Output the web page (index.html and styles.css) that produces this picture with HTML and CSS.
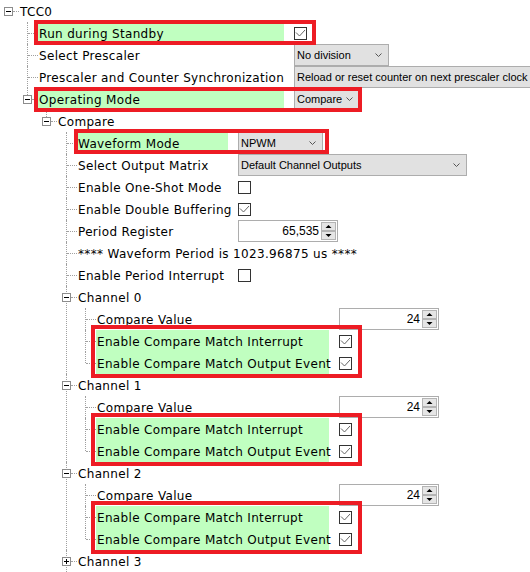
FILE: index.html
```html
<!DOCTYPE html>
<html>
<head>
<meta charset="utf-8">
<title>TCC0</title>
<link rel="stylesheet" href="styles.css">
</head>
<body>
<div class="tree">
  <div class="item root">
    <div class="row">
      <span class="gut"><svg class="tog" width="9" height="9" viewBox="0 0 9 9"><rect x=".5" y=".5" width="8" height="8" fill="#fff" stroke="#8c8c8c"/><path d="M2 4.5h5" stroke="#000"/></svg><i class="con"></i></span>
      <span class="txt">TCC0</span>
    </div>
    <div class="kids g1">
      <div class="item">
        <div class="row">
          <span class="gut"><i class="con leaf"></i></span>
          <span class="hl hl-rs">
            <span class="lbl on">Run during Standby</span>
            <span class="val"><svg class="cb" width="13" height="13" viewBox="0 0 13 13"><rect x=".5" y=".5" width="12" height="12" fill="#fff" stroke="#333"/><path d="M2 5.5l3.5 3.5 5.5-6" fill="none" stroke="#666"/></svg></span>
          </span>
        </div>
      </div>
      <div class="item">
        <div class="row">
          <span class="gut"><i class="con leaf"></i></span>
          <span class="lbl">Select Prescaler</span>
          <span class="val"><span class="dd w-nodiv"><span class="ddt">No division</span><svg class="chev" width="7" height="4" viewBox="0 0 7 4"><path d="M.5 .5l3 3 3-3" fill="none" stroke="#555"/></svg></span></span>
        </div>
      </div>
      <div class="item">
        <div class="row">
          <span class="gut"><i class="con leaf"></i></span>
          <span class="lbl">Prescaler and Counter Synchronization</span>
          <span class="val"><span class="dd w-reload"><span class="ddt">Reload or reset counter on next prescaler clock</span></span></span>
        </div>
      </div>
      <div class="item">
        <div class="row">
          <span class="gut"><svg class="tog" width="9" height="9" viewBox="0 0 9 9"><rect x=".5" y=".5" width="8" height="8" fill="#fff" stroke="#8c8c8c"/><path d="M2 4.5h5" stroke="#000"/></svg><i class="con"></i></span>
          <span class="hl hl-om">
            <span class="lbl on">Operating Mode</span>
            <span class="val"><span class="dd w-cmp"><span class="ddt">Compare</span><svg class="chev" width="7" height="4" viewBox="0 0 7 4"><path d="M.5 .5l3 3 3-3" fill="none" stroke="#555"/></svg></span></span>
          </span>
        </div>
        <div class="kids">
          <div class="item">
            <div class="row">
              <span class="gut"><svg class="tog" width="9" height="9" viewBox="0 0 9 9"><rect x=".5" y=".5" width="8" height="8" fill="#fff" stroke="#8c8c8c"/><path d="M2 4.5h5" stroke="#000"/></svg><i class="con"></i></span>
              <span class="txt">Compare</span>
            </div>
            <div class="kids k3 g3">
              <div class="item">
                <div class="row">
                  <span class="gut"><i class="con leaf"></i></span>
                  <span class="hl hl-wf">
                    <span class="lbl on">Waveform Mode</span>
                    <span class="val"><span class="dd w-npwm"><span class="ddt">NPWM</span><svg class="chev" width="7" height="4" viewBox="0 0 7 4"><path d="M.5 .5l3 3 3-3" fill="none" stroke="#555"/></svg></span></span>
                  </span>
                </div>
              </div>
              <div class="item">
                <div class="row">
                  <span class="gut"><i class="con leaf"></i></span>
                  <span class="lbl">Select Output Matrix</span>
                  <span class="val"><span class="dd w-matrix"><span class="ddt">Default Channel Outputs</span><svg class="chev" width="7" height="4" viewBox="0 0 7 4"><path d="M.5 .5l3 3 3-3" fill="none" stroke="#555"/></svg></span></span>
                </div>
              </div>
              <div class="item">
                <div class="row">
                  <span class="gut"><i class="con leaf"></i></span>
                  <span class="lbl">Enable One-Shot Mode</span>
                  <span class="val"><svg class="cb" width="13" height="13" viewBox="0 0 13 13"><rect x=".5" y=".5" width="12" height="12" fill="#fff" stroke="#333"/></svg></span>
                </div>
              </div>
              <div class="item">
                <div class="row">
                  <span class="gut"><i class="con leaf"></i></span>
                  <span class="lbl">Enable Double Buffering</span>
                  <span class="val"><svg class="cb" width="13" height="13" viewBox="0 0 13 13"><rect x=".5" y=".5" width="12" height="12" fill="#fff" stroke="#333"/><path d="M2 5.5l3.5 3.5 5.5-6" fill="none" stroke="#666"/></svg></span>
                </div>
              </div>
              <div class="item">
                <div class="row">
                  <span class="gut"><i class="con leaf"></i></span>
                  <span class="lbl">Period Register</span>
                  <span class="val"><span class="spin"><span class="num">65,535</span><svg class="arr" width="15" height="18" viewBox="0 0 15 18"><rect x=".5" y=".5" width="14" height="8" fill="#e5e5e5" stroke="#b4b4b4"/><rect x=".5" y="9.5" width="14" height="8" fill="#e5e5e5" stroke="#b4b4b4"/><path d="M4.5 6h6l-3-3z" fill="#000"/><path d="M4.5 12h6l-3 3z" fill="#000"/></svg></span></span>
                </div>
              </div>
              <div class="item">
                <div class="row">
                  <span class="gut"><i class="con leaf"></i></span>
                  <span class="txt">**** Waveform Period is 1023.96875 us ****</span>
                </div>
              </div>
              <div class="item">
                <div class="row">
                  <span class="gut"><i class="con leaf"></i></span>
                  <span class="lbl">Enable Period Interrupt</span>
                  <span class="val"><svg class="cb" width="13" height="13" viewBox="0 0 13 13"><rect x=".5" y=".5" width="12" height="12" fill="#fff" stroke="#333"/></svg></span>
                </div>
              </div>

              <div class="item">
                <div class="row">
                  <span class="gut"><svg class="tog" width="9" height="9" viewBox="0 0 9 9"><rect x=".5" y=".5" width="8" height="8" fill="#fff" stroke="#8c8c8c"/><path d="M2 4.5h5" stroke="#000"/></svg><i class="con"></i></span>
                  <span class="txt">Channel 0</span>
                </div>
                <div class="kids g4">
                  <div class="item">
                    <div class="row">
                      <span class="gut"><i class="con leaf"></i></span>
                      <span class="lbl">Compare Value</span>
                      <span class="val"><span class="spin"><span class="num">24</span><svg class="arr" width="15" height="18" viewBox="0 0 15 18"><rect x=".5" y=".5" width="14" height="8" fill="#e5e5e5" stroke="#b4b4b4"/><rect x=".5" y="9.5" width="14" height="8" fill="#e5e5e5" stroke="#b4b4b4"/><path d="M4.5 6h6l-3-3z" fill="#000"/><path d="M4.5 12h6l-3 3z" fill="#000"/></svg></span></span>
                    </div>
                  </div>
                  <div class="hlg">
                    <div class="item">
                      <div class="row">
                        <span class="gut"><i class="con leaf"></i></span>
                        <span class="lbl on">Enable Compare Match Interrupt</span>
                        <span class="val"><svg class="cb" width="13" height="13" viewBox="0 0 13 13"><rect x=".5" y=".5" width="12" height="12" fill="#fff" stroke="#333"/><path d="M2 5.5l3.5 3.5 5.5-6" fill="none" stroke="#666"/></svg></span>
                      </div>
                    </div>
                    <div class="item">
                      <div class="row">
                        <span class="gut"><i class="con leaf"></i></span>
                        <span class="lbl on">Enable Compare Match Output Event</span>
                        <span class="val"><svg class="cb" width="13" height="13" viewBox="0 0 13 13"><rect x=".5" y=".5" width="12" height="12" fill="#fff" stroke="#333"/><path d="M2 5.5l3.5 3.5 5.5-6" fill="none" stroke="#666"/></svg></span>
                      </div>
                    </div>
                  </div>
                </div>
              </div>

              <div class="item">
                <div class="row">
                  <span class="gut"><svg class="tog" width="9" height="9" viewBox="0 0 9 9"><rect x=".5" y=".5" width="8" height="8" fill="#fff" stroke="#8c8c8c"/><path d="M2 4.5h5" stroke="#000"/></svg><i class="con"></i></span>
                  <span class="txt">Channel 1</span>
                </div>
                <div class="kids g4">
                  <div class="item">
                    <div class="row">
                      <span class="gut"><i class="con leaf"></i></span>
                      <span class="lbl">Compare Value</span>
                      <span class="val"><span class="spin"><span class="num">24</span><svg class="arr" width="15" height="18" viewBox="0 0 15 18"><rect x=".5" y=".5" width="14" height="8" fill="#e5e5e5" stroke="#b4b4b4"/><rect x=".5" y="9.5" width="14" height="8" fill="#e5e5e5" stroke="#b4b4b4"/><path d="M4.5 6h6l-3-3z" fill="#000"/><path d="M4.5 12h6l-3 3z" fill="#000"/></svg></span></span>
                    </div>
                  </div>
                  <div class="hlg">
                    <div class="item">
                      <div class="row">
                        <span class="gut"><i class="con leaf"></i></span>
                        <span class="lbl on">Enable Compare Match Interrupt</span>
                        <span class="val"><svg class="cb" width="13" height="13" viewBox="0 0 13 13"><rect x=".5" y=".5" width="12" height="12" fill="#fff" stroke="#333"/><path d="M2 5.5l3.5 3.5 5.5-6" fill="none" stroke="#666"/></svg></span>
                      </div>
                    </div>
                    <div class="item">
                      <div class="row">
                        <span class="gut"><i class="con leaf"></i></span>
                        <span class="lbl on">Enable Compare Match Output Event</span>
                        <span class="val"><svg class="cb" width="13" height="13" viewBox="0 0 13 13"><rect x=".5" y=".5" width="12" height="12" fill="#fff" stroke="#333"/><path d="M2 5.5l3.5 3.5 5.5-6" fill="none" stroke="#666"/></svg></span>
                      </div>
                    </div>
                  </div>
                </div>
              </div>

              <div class="item">
                <div class="row">
                  <span class="gut"><svg class="tog" width="9" height="9" viewBox="0 0 9 9"><rect x=".5" y=".5" width="8" height="8" fill="#fff" stroke="#8c8c8c"/><path d="M2 4.5h5" stroke="#000"/></svg><i class="con"></i></span>
                  <span class="txt">Channel 2</span>
                </div>
                <div class="kids g4">
                  <div class="item">
                    <div class="row">
                      <span class="gut"><i class="con leaf"></i></span>
                      <span class="lbl">Compare Value</span>
                      <span class="val"><span class="spin"><span class="num">24</span><svg class="arr" width="15" height="18" viewBox="0 0 15 18"><rect x=".5" y=".5" width="14" height="8" fill="#e5e5e5" stroke="#b4b4b4"/><rect x=".5" y="9.5" width="14" height="8" fill="#e5e5e5" stroke="#b4b4b4"/><path d="M4.5 6h6l-3-3z" fill="#000"/><path d="M4.5 12h6l-3 3z" fill="#000"/></svg></span></span>
                    </div>
                  </div>
                  <div class="hlg">
                    <div class="item">
                      <div class="row">
                        <span class="gut"><i class="con leaf"></i></span>
                        <span class="lbl on">Enable Compare Match Interrupt</span>
                        <span class="val"><svg class="cb" width="13" height="13" viewBox="0 0 13 13"><rect x=".5" y=".5" width="12" height="12" fill="#fff" stroke="#333"/><path d="M2 5.5l3.5 3.5 5.5-6" fill="none" stroke="#666"/></svg></span>
                      </div>
                    </div>
                    <div class="item">
                      <div class="row">
                        <span class="gut"><i class="con leaf"></i></span>
                        <span class="lbl on">Enable Compare Match Output Event</span>
                        <span class="val"><svg class="cb" width="13" height="13" viewBox="0 0 13 13"><rect x=".5" y=".5" width="12" height="12" fill="#fff" stroke="#333"/><path d="M2 5.5l3.5 3.5 5.5-6" fill="none" stroke="#666"/></svg></span>
                      </div>
                    </div>
                  </div>
                </div>
              </div>

              <div class="item cont">
                <div class="row">
                  <span class="gut"><svg class="tog" width="9" height="9" viewBox="0 0 9 9"><rect x=".5" y=".5" width="8" height="8" fill="#fff" stroke="#8c8c8c"/><path d="M2 4.5h5M4.5 2v5" stroke="#000"/></svg><i class="con"></i></span>
                  <span class="txt">Channel 3</span>
                </div>
              </div>
            </div>
          </div>
        </div>
      </div>
    </div>
  </div>
</div>
</body>
</html>
```

FILE: styles.css
```css
html, body {
  margin: 0;
  padding: 0;
  overflow: hidden;
  background: #fff;
}

body {
  width: 530px;
  height: 572px;
  font: 12px "DejaVu Sans", Verdana, sans-serif;
  color: #000;
}

.tree {
  padding-left: 4px;
}

.item {
  position: relative;
}

.item::before {
  content: "";
  position: absolute;
  left: 4px;
  top: 0;
  height: 100%;
  border-left: 1px dotted #a0a0a0;
}

.item:last-child::before {
  height: 11px;
}

/* the list goes on below the visible area */
.item.cont::before {
  height: 100%;
}

.root::before {
  display: none;
}

.kids {
  margin-left: 19px;
}

.kids.k3 {
  margin-left: 20px;
}

.g1 { --lw: 246px; }
.g3 { --lw: 151px; }
.g4 { --lw: 233px; }

.row {
  display: flex;
  align-items: flex-start;
  height: 22px;
  white-space: nowrap;
}

.gut {
  display: flex;
  align-items: flex-start;
  flex: none;
  width: 15px;
  height: 22px;
}

.tog {
  display: block;
  flex: none;
  margin-top: 7px;
  position: relative;
  z-index: 1;
}

.con {
  display: block;
  flex: none;
  width: 6px;
  height: 0;
  margin-top: 11px;
  border-top: 1px dotted #a0a0a0;
}

.con.leaf {
  width: 10px;
  margin-left: 5px;
}

.txt,
.lbl {
  height: 22px;
  line-height: 25px;
  padding-left: 1px;
  letter-spacing: 0.33px;
}

.lbl {
  flex: none;
  box-sizing: border-box;
  width: var(--lw);
  margin-right: 10px;
}

.on {
  background: #c0ffc0;
}

.val {
  display: flex;
  align-items: center;
  height: 22px;
}

.cb {
  display: block;
}

/* drop-down boxes */
.dd {
  display: flex;
  align-items: center;
  justify-content: space-between;
  box-sizing: border-box;
  height: 22px;
  padding: 0 6px 0 2px;
  border: 1px solid #adadad;
  background: #e1e1e1;
  font: 11px "Liberation Sans", Arial, sans-serif;
  color: #000;
}

.chev {
  display: block;
  flex: none;
}

.w-nodiv { width: 95px; }
.w-reload { width: 240px; }
.w-cmp { width: 66px; }
.w-npwm { width: 85px; }
.w-matrix { width: 229px; }

/* numeric spinners */
.spin {
  display: flex;
  align-items: center;
  justify-content: flex-end;
  box-sizing: border-box;
  width: 100px;
  height: 22px;
  padding-right: 1px;
  border: 1px solid #adadad;
  background: #fff;
  font: 12px "Liberation Sans", Arial, sans-serif;
}

.num {
  margin-right: 2px;
}

.arr {
  display: block;
}

/* red annotation boxes */
.hl {
  position: relative;
  display: flex;
  align-items: flex-start;
}

.hl::after,
.hlg::after {
  content: "";
  position: absolute;
  z-index: 3;
  border: 4px solid #ed1c24;
  pointer-events: none;
}

.hl::after {
  top: -2px;
  bottom: -1px;
  left: -4px;
  right: -9px;
}

.hl-om::after {
  top: -1px;
  bottom: -2px;
  right: -2px;
}

.hl-wf::after {
  top: -3px;
  bottom: 0;
  left: -3px;
  right: -6px;
}

.hlg {
  position: relative;
}

.hlg::after {
  box-sizing: border-box;
  top: -5px;
  bottom: -4px;
  left: 10px;
  width: 271px;
}
```
